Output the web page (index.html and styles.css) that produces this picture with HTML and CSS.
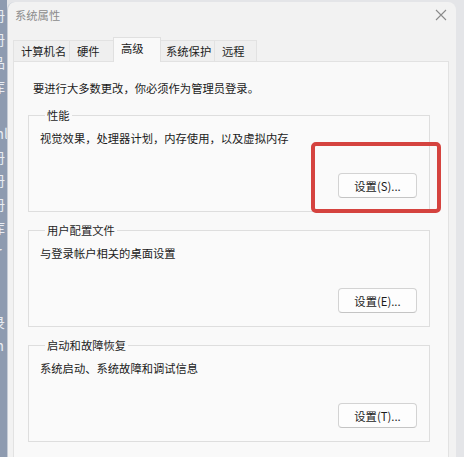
FILE: index.html
```html
<!DOCTYPE html>
<html lang="zh-CN">
<head>
    <meta charset="UTF-8">
    <title>系统属性</title>
    <link rel="stylesheet" href="styles.css">
</head>
<body>
    <div class="screen">
        <div class="desktop">
            <span>册</span><span>册</span><span>品</span><span>库</span><span>S</span>
            <span>ml</span><span>册</span><span>册</span><span>册</span><span>库</span>
            <span>tr</span><span>a</span><span>if</span><span>录</span><span>m</span>
        </div>

        <div class="window">
            <div class="titlebar">
                <span class="title">系统属性</span>
                <svg class="close" width="12" height="12" viewBox="0 0 12 12">
                    <path d="M1 1 L11 11 M11 1 L1 11" stroke="#8a8a8a" stroke-width="1.1" fill="none"/>
                </svg>
            </div>

            <div class="tabs">
                <div class="tab" style="width:57px">计算机名</div>
                <div class="tab" style="width:45px">硬件</div>
                <div class="tab active" style="width:48px">高级</div>
                <div class="tab" style="width:55px;padding-left:5px">系统保护</div>
                <div class="tab" style="width:43px">远程</div>
            </div>

            <div class="panel">
                <p class="notice">要进行大多数更改，你必须作为管理员登录。</p>

                <fieldset class="group">
                    <legend>性能</legend>
                    <p class="group-text">视觉效果，处理器计划，内存使用，以及虚拟内存</p>
                    <div class="group-actions"><button type="button" class="btn">设置(S)...</button></div>
                </fieldset>

                <fieldset class="group">
                    <legend>用户配置文件</legend>
                    <p class="group-text">与登录帐户相关的桌面设置</p>
                    <div class="group-actions"><button type="button" class="btn">设置(E)...</button></div>
                </fieldset>

                <fieldset class="group">
                    <legend>启动和故障恢复</legend>
                    <p class="group-text">系统启动、系统故障和调试信息</p>
                    <div class="group-actions"><button type="button" class="btn">设置(T)...</button></div>
                </fieldset>
            </div>
        </div>

        <div class="highlight"></div>
    </div>
</body>
</html>
```

FILE: styles.css
```css
html, body {
    margin: 0;
    padding: 0;
}
body {
    font-family: "Noto Sans CJK SC", "Noto Sans", sans-serif;
    font-size: 11.3px;
    color: #1b1b1b;
    width: 464px;
    height: 457px;
    overflow: hidden;
}
.screen {
    position: relative;
    display: flex;
    height: 457px;
    background-color: #e4e5e8;
}
.desktop {
    width: 7px;
    flex-shrink: 0;
    background-color: #8e9bb0;
    overflow: hidden;
    display: flex;
    flex-direction: column;
    padding-top: 7px;
    box-sizing: border-box;
}
.desktop span {
    display: block;
    height: 23.6px;
    line-height: 16px;
    font-size: 14px;
    color: #e9edf3;
    margin-left: -9px;
    white-space: nowrap;
}
.window {
    width: 449px;
    flex-shrink: 0;
    margin-top: 2px;
    background-color: #f2f2f2;
    border-radius: 8px 8px 0 0;
    border-left: 1px solid #c6ccd6;
    box-sizing: border-box;
    display: flex;
    flex-direction: column;
}
.titlebar {
    height: 26px;
    display: flex;
    align-items: center;
    justify-content: space-between;
    padding: 0 9px 0 7px;
}
.title {
    color: #8c8c8c;
    line-height: 14px;
}
.close {
    display: block;
}
.tabs {
    display: flex;
    align-items: flex-end;
    height: 23px;
    margin-top: 10px;
    margin-left: 5px;
}
.tab {
    height: 21px;
    line-height: 20px;
    padding-left: 7px;
    box-sizing: border-box;
    background-color: #efefef;
    border: 1px solid #e2e2e2;
    border-bottom: none;
    margin-right: -1px;
    white-space: nowrap;
}
.tab.active {
    position: relative;
    z-index: 1;
    height: 25px;
    line-height: 20px;
    margin-bottom: -1px;
    background-color: #f9f9f9;
    border-color: #e0e0e0;
    padding-bottom: 3px;
}
.panel {
    flex: 1;
    margin-left: 5px;
    width: 436px;
    box-sizing: border-box;
    background-color: #f9f9f9;
    border: 1px solid #e2e2e2;
    border-bottom: none;
    padding: 0 18px 0 14px;
}
.notice {
    margin: 18px 0 12px 5px;
    line-height: 16px;
}
.group {
    margin: 0 0 11px 0;
    padding: 0 12px 13px 11px;
    border: 1px solid #dedede;
    min-inline-size: 0;
    background-color: #fafafa;
}
.group legend {
    padding: 0 2px;
    margin-left: 5px;
    line-height: 14px;
    color: #1f1f1f;
}
.group-text {
    margin: 8px 0 0 0;
    line-height: 16px;
}
.group-actions {
    display: flex;
    justify-content: flex-end;
    margin-top: 27px;
}
.btn {
    width: 79px;
    height: 25px;
    padding: 0;
    font-family: inherit;
    font-size: 11.3px;
    color: #1b1b1b;
    background-color: #fdfdfd;
    border: 1px solid #d3d3d3;
    border-bottom-color: #c4c4c4;
    border-radius: 4px;
}
.highlight {
    position: absolute;
    left: 311px;
    top: 142px;
    width: 130px;
    height: 71px;
    box-sizing: border-box;
    border: 4px solid #d5433f;
    border-radius: 5px;
}
```
